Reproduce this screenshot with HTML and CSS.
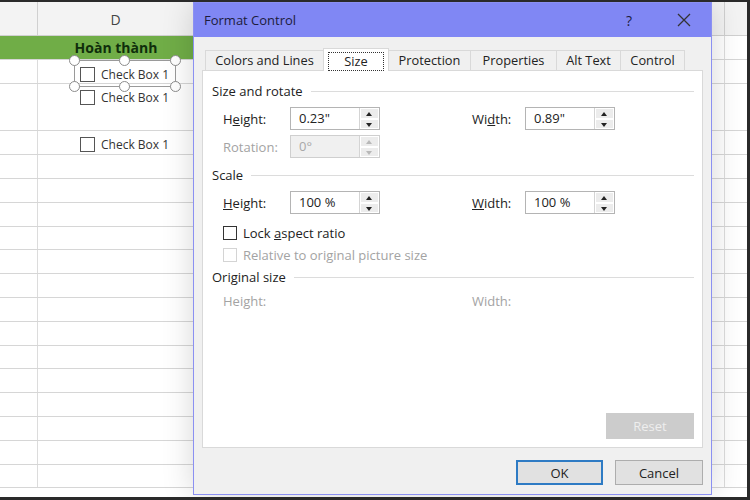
FILE: index.html
```html
<!DOCTYPE html>
<html lang="vi">
<head>
    <meta charset="UTF-8">
    <title>Format Control</title>
    <link rel="stylesheet" href="styles.css">
</head>
<body>
    <div class="frame">
        <div class="sheet">
            <div class="row head">
                <div class="c a"></div><div class="c d">D</div><div class="c e"></div><div class="c f"></div>
            </div>
            <div class="row green">
                <div class="c a"></div><div class="c d">Hoàn thành</div><div class="c e"></div><div class="c f"></div>
            </div>
            <div class="row r1">
                <div class="c a"></div>
                <div class="c d"><span class="cb"><i></i>Check Box 1</span></div>
                <div class="c e"></div><div class="c f"></div>
            </div>
            <div class="row tall">
                <div class="c a"></div>
                <div class="c d"><span class="cb"><i></i>Check Box 1</span></div>
                <div class="c e"></div><div class="c f"></div>
            </div>
            <div class="row r3">
                <div class="c a"></div>
                <div class="c d"><span class="cb"><i></i>Check Box 1</span></div>
                <div class="c e"></div><div class="c f"></div>
            </div>
            <div class="row"><div class="c a"></div><div class="c d"></div><div class="c e"></div><div class="c f"></div></div>
            <div class="row"><div class="c a"></div><div class="c d"></div><div class="c e"></div><div class="c f"></div></div>
            <div class="row"><div class="c a"></div><div class="c d"></div><div class="c e"></div><div class="c f"></div></div>
            <div class="row"><div class="c a"></div><div class="c d"></div><div class="c e"></div><div class="c f"></div></div>
            <div class="row"><div class="c a"></div><div class="c d"></div><div class="c e"></div><div class="c f"></div></div>
            <div class="row"><div class="c a"></div><div class="c d"></div><div class="c e"></div><div class="c f"></div></div>
            <div class="row"><div class="c a"></div><div class="c d"></div><div class="c e"></div><div class="c f"></div></div>
            <div class="row"><div class="c a"></div><div class="c d"></div><div class="c e"></div><div class="c f"></div></div>
            <div class="row"><div class="c a"></div><div class="c d"></div><div class="c e"></div><div class="c f"></div></div>
            <div class="row"><div class="c a"></div><div class="c d"></div><div class="c e"></div><div class="c f"></div></div>
            <div class="row"><div class="c a"></div><div class="c d"></div><div class="c e"></div><div class="c f"></div></div>
            <div class="row"><div class="c a"></div><div class="c d"></div><div class="c e"></div><div class="c f"></div></div>
            <div class="row"><div class="c a"></div><div class="c d"></div><div class="c e"></div><div class="c f"></div></div>
            <div class="row"><div class="c a"></div><div class="c d"></div><div class="c e"></div><div class="c f"></div></div>
        </div>

        <!-- selected check box with its sizing handles -->
        <div class="selection">
            <span class="handle h-tl"></span><span class="handle h-tm"></span><span class="handle h-tr"></span>
            <span class="handle h-bl"></span><span class="handle h-bm"></span><span class="handle h-br"></span>
        </div>

        <div class="dialog">
            <div class="titlebar">
                <span class="title">Format Control</span>
                <span class="help">?</span>
                <svg class="close" width="14" height="14" viewBox="0 0 14 14">
                    <path d="M1 1 L13 13 M13 1 L1 13" stroke="#333" stroke-width="1.3" fill="none"/>
                </svg>
            </div>
            <div class="dbody">
                <div class="tabs">
                    <div class="tab w1">Colors and Lines</div>
                    <div class="tab w2 active"><span class="focus">Size</span></div>
                    <div class="tab w3">Protection</div>
                    <div class="tab w4">Properties</div>
                    <div class="tab w5">Alt Text</div>
                    <div class="tab w6">Control</div>
                </div>
                <div class="panel">
                    <div class="legend first">Size and rotate</div>
                    <div class="frow">
                        <div class="grp">
                            <span class="lbl">H<u>e</u>ight:</span>
                            <div class="spin"><span class="val">0.23"</span><div class="arrows"><b class="up"></b><b class="down"></b></div></div>
                        </div>
                        <div class="grp">
                            <span class="lbl lw">Wi<u>d</u>th:</span>
                            <div class="spin"><span class="val">0.89"</span><div class="arrows"><b class="up"></b><b class="down"></b></div></div>
                        </div>
                    </div>
                    <div class="frow rot">
                        <div class="grp">
                            <span class="lbl off">Rotation:</span>
                            <div class="spin off"><span class="val">0°</span><div class="arrows"><b class="up"></b><b class="down"></b></div></div>
                        </div>
                    </div>

                    <div class="legend scale">Scale</div>
                    <div class="frow">
                        <div class="grp">
                            <span class="lbl"><u>H</u>eight:</span>
                            <div class="spin"><span class="val">100 %</span><div class="arrows"><b class="up"></b><b class="down"></b></div></div>
                        </div>
                        <div class="grp">
                            <span class="lbl lw"><u>W</u>idth:</span>
                            <div class="spin"><span class="val">100 %</span><div class="arrows"><b class="up"></b><b class="down"></b></div></div>
                        </div>
                    </div>
                    <div class="check lock"><i></i><span>Lock <u>a</u>spect ratio</span></div>
                    <div class="check off"><i></i><span>Relative to original picture size</span></div>

                    <div class="legend orig">Original size</div>
                    <div class="frow plain">
                        <div class="grp"><span class="lbl off">Height:</span></div>
                        <div class="grp"><span class="lbl off">Width:</span></div>
                    </div>

                    <button class="btn reset">Reset</button>
                </div>
                <div class="footer">
                    <button class="btn ok">OK</button>
                    <button class="btn">Cancel</button>
                </div>
            </div>
        </div>
    </div>
</body>
</html>
```

FILE: styles.css
```css
body {
    margin: 0;
    font-family: "Open Sans", "Noto Sans", sans-serif;
    background: #fff;
}
.frame {
    position: relative;
    width: 750px;
    height: 500px;
    box-sizing: border-box;
    border-top: 2px solid #2a2a2a;
    border-right: 3px solid #2a2a2a;
    border-bottom: 3px solid #2a2a2a;
    overflow: hidden;
    background: #fff;
}

/* spreadsheet behind the dialog */
.row {
    display: flex;
    height: 23.8px;
    box-sizing: border-box;
    border-bottom: 1px solid #d6d6d6;
}
.c {
    box-sizing: border-box;
    border-right: 1px solid #dcdcdc;
    height: 100%;
}
.a { width: 38px; }
.d { width: 156px; }
.e { width: 531px; }
.f { flex: 1; border-right: none; }
.row.head {
    height: 34px;
    background: #f3f3f3;
    border-bottom: 1px solid #d0d0d0;
}
.head .c { border-right-color: #d0d0d0; }
.head .d {
    text-align: center;
    font-size: 14px;
    line-height: 36px;
    color: #444;
}
.row.green {
    height: 24px;
    background: #70ad47;
}
.green .a, .green .d { border-right: none; }
.green .e, .green .f { background: #fff; }
.green .d {
    text-align: center;
    font-weight: bold;
    font-size: 14px;
    line-height: 24px;
    color: #0f2e0b;
}
.row.tall { height: 47.6px; }
.cb {
    display: flex;
    align-items: center;
    gap: 6px;
    padding-left: 42px;
    font-size: 12px;
    color: #333;
    height: 20px;
}
.cb i {
    width: 13px;
    height: 13px;
    border: 1px solid #555;
    background: #fff;
}
.r1 .cb { margin-top: 4px; }
.tall .cb { margin-top: 4px; }
.r3 .cb { margin-top: 3px; }

.selection {
    position: absolute;
    left: 74px;
    top: 58px;
    width: 102px;
    height: 27px;
    border: 1px solid #9a9a9a;
    box-sizing: border-box;
}
.handle {
    position: absolute;
    width: 9px;
    height: 9px;
    border: 1.5px solid #8c8c8c;
    border-radius: 50%;
    background: #fff;
}
.h-tl { left: -6px; top: -6px; }
.h-tm { left: 44px; top: -6px; }
.h-tr { right: -6px; top: -6px; }
.h-bl { left: -6px; bottom: -6px; }
.h-bm { left: 44px; bottom: -6px; }
.h-br { right: -6px; bottom: -6px; }

/* dialog window */
.dialog {
    position: absolute;
    left: 193px;
    top: 0;
    width: 519px;
    height: 493px;
    box-sizing: border-box;
    border: 1px solid #8b90f2;
    background: #f0f0f0;
    box-shadow: 0 0 30px rgba(0, 0, 0, 0.16);
}
.titlebar {
    display: flex;
    align-items: center;
    height: 34px;
    background: #8087f4;
    color: #1c1c3c;
}
.title {
    flex: 1;
    padding-left: 10px;
    font-size: 13px;
}
.help {
    font-size: 14px;
    margin-right: 45px;
}
.close { margin-right: 20px; }
.dbody { padding: 0 8px; }
.tabs {
    display: flex;
    align-items: flex-end;
    height: 33px;
    padding-left: 3px;
}
.tab {
    box-sizing: border-box;
    height: 20px;
    border: 1px solid #d9d9d9;
    border-bottom: none;
    border-right: none;
    font-size: 12.8px;
    line-height: 19px;
    text-align: center;
    color: #222;
    background: #f0f0f0;
}
.w6 { border-right: 1px solid #d9d9d9; }
.w1 { width: 118px; }
.w2 { width: 66px; }
.w3 { width: 81px; }
.w4 { width: 86px; }
.w5 { width: 64px; }
.w6 { width: 65px; }
.tab.active {
    height: 23px;
    background: #fff;
    border-right: 1px solid #d9d9d9;
    margin-bottom: -1px;
    position: relative;
    padding-top: 3px;
}
.tab.active + .tab { border-left: none; }
.focus {
    display: inline-block;
    width: 54px;
    height: 17px;
    line-height: 16px;
    border: 1px dotted #333;
}
.panel {
    display: flex;
    flex-direction: column;
    box-sizing: border-box;
    height: 378px;
    background: #fff;
    border: 1px solid #d9d9d9;
    padding: 0 8px 8px 9px;
}
.legend {
    display: flex;
    align-items: center;
    gap: 8px;
    height: 18px;
    font-size: 13px;
    color: #222;
}
.legend::after {
    content: "";
    flex: 1;
    border-top: 1px solid #dcdcdc;
}
.legend.first { margin-top: 11px; }
.legend.scale { margin-top: 8px; }
.legend.orig { margin-top: 4px; }
.frow {
    display: flex;
    align-items: center;
    height: 23px;
    padding-left: 11px;
    margin-top: 7px;
}
.frow.rot { margin-top: 5px; }
.frow.plain { height: 18px; margin-top: 6px; }
.grp {
    display: flex;
    align-items: center;
    flex: none;
    width: 249px;
}
.grp + .grp { width: auto; }
.lbl {
    width: 67px;
    font-size: 13px;
    color: #222;
}
.lbl.lw { width: 53px; }
.off, .lbl.off { color: #a3a3a3; }
.spin {
    display: flex;
    width: 90px;
    height: 23px;
    box-sizing: border-box;
    border: 1px solid #b4b4b4;
    background: #fff;
}
.val {
    flex: 1;
    padding-left: 8px;
    font-size: 13px;
    line-height: 21px;
    color: #222;
}
.spin.off { background: #f0f0f0; border-color: #cfcfcf; }
.spin.off .val { color: #a8a8a8; }
.arrows {
    display: flex;
    flex-direction: column;
    width: 19px;
    border-left: 1px solid #d4d4d4;
}
.arrows b {
    flex: 1;
    position: relative;
    background: #ececec;
    border: 1px solid #fff;
}
.arrows b::after {
    content: "";
    position: absolute;
    left: 5px;
    border-left: 3.5px solid transparent;
    border-right: 3.5px solid transparent;
}
.up::after { top: 3px; border-bottom: 4px solid #222; }
.down::after { top: 3px; border-top: 4px solid #222; }
.spin.off .up::after { border-bottom-color: #b8b8b8; }
.spin.off .down::after { border-top-color: #b8b8b8; }
.check {
    display: flex;
    align-items: center;
    gap: 6px;
    height: 18px;
    padding-left: 11px;
    font-size: 13px;
    color: #222;
}
.check i {
    width: 12px;
    height: 12px;
    border: 1px solid #333;
}
.check.lock { margin-top: 10px; }
.check.off { margin-top: 4px; color: #a3a3a3; }
.check.off i { border-color: #d4d4d4; }
.btn {
    width: 88px;
    height: 25px;
    box-sizing: border-box;
    border: 1px solid #adadad;
    background: #e1e1e1;
    font-family: "Open Sans", "Noto Sans", sans-serif;
    font-size: 13px;
    color: #222;
    padding: 0;
}
.reset {
    margin-top: auto;
    align-self: flex-end;
    height: 26px;
    background: #cccccc;
    border-color: #cccccc;
    color: #eeeeee;
}
.footer {
    display: flex;
    justify-content: flex-end;
    gap: 12px;
    margin-top: 12px;
}
.btn.ok {
    width: 87px;
    border: 2px solid #2e7bc4;
}
```
